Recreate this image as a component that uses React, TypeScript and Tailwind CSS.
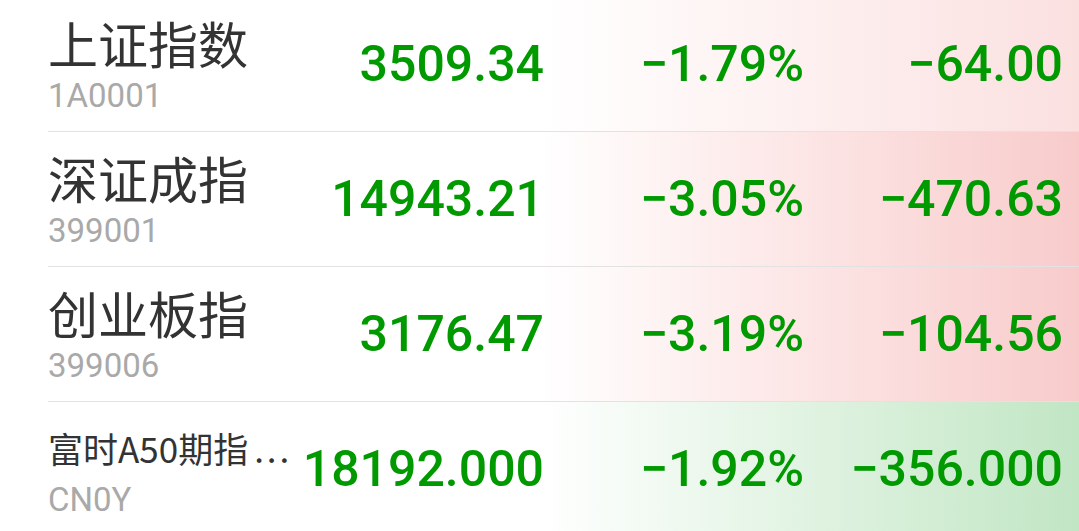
const rows = [
  {
    name: "上证指数",
    code: "1A0001",
    price: "3509.34",
    pct: "−1.79%",
    chg: "−64.00",
    bg: "bg-linear-to-r from-white from-[50%] to-[#fbe0e0]",
    small: false,
  },
  {
    name: "深证成指",
    code: "399001",
    price: "14943.21",
    pct: "−3.05%",
    chg: "−470.63",
    bg: "bg-linear-to-r from-white from-[50%] to-[#f8cbcb]",
    small: false,
  },
  {
    name: "创业板指",
    code: "399006",
    price: "3176.47",
    pct: "−3.19%",
    chg: "−104.56",
    bg: "bg-linear-to-r from-white from-[50%] to-[#f8cbcb]",
    small: false,
  },
  {
    name: "富时A50期指",
    code: "CN0Y",
    price: "18192.000",
    pct: "−1.92%",
    chg: "−356.000",
    bg: "bg-linear-to-r from-white from-[50%] to-[#c1e6c4]",
    small: true,
  },
];

const cjk = "font-['Noto_Sans_CJK_SC','Noto_Sans',sans-serif]";
const num = "font-['Roboto','Liberation_Sans',sans-serif]";

export default function App() {
  return (
    <div className="w-[1079px] h-[531px] overflow-hidden bg-white">
      <div className="-mt-[3px]">
        {rows.map((r, i) => (
          <div key={r.code}>
            {i > 0 && <div className="ml-[48px] h-px bg-[#e2e2e2]" />}
            <div className={`flex h-[134px] items-center pl-[48px] pr-[16px] ${r.bg}`}>
              <div className="w-[250px] flex flex-col">
                <div
                  className={`${cjk} text-[#333333] whitespace-nowrap ${
                    r.small ? "text-[35px] leading-[40px] mt-[10px]" : "text-[50px] leading-[56px] mt-[2px]"
                  }`}
                >
                  {r.name}
                  {r.small && <span className="ml-[6px] tracking-[3px]">...</span>}
                </div>
                <div
                  className={`${num} text-[#a9a9a9] text-[33px] leading-[40px] ${
                    r.small ? "mt-[12px]" : "mt-[6px]"
                  }`}
                >
                  {r.code}
                </div>
              </div>
              <div className={`${num} w-[246px] text-right text-[50px] font-medium text-[#009a00] whitespace-nowrap`}>
                {r.price}
              </div>
              <div className={`${num} w-[260px] text-right text-[50px] font-medium text-[#009a00]`}>
                {r.pct}
              </div>
              <div className={`${num} w-[259px] text-right text-[50px] font-medium text-[#009a00]`}>
                {r.chg}
              </div>
            </div>
          </div>
        ))}
      </div>
    </div>
  );
}
